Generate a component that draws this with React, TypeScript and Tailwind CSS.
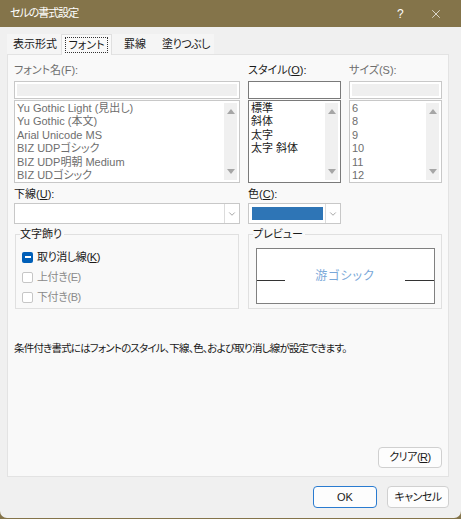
import { ChevronDown, X } from 'lucide-react';

const FONT = "font-['Liberation_Sans','Noto_Sans_CJK_JP',sans-serif] [font-feature-settings:'palt']";

function Arrow({ up }: { up?: boolean }) {
  return (
    <svg width="8" height="5" viewBox="0 0 8 5">
      <polygon points={up ? '0,5 4,0 8,5' : '0,0 8,0 4,5'} fill="#a6a6a6" />
    </svg>
  );
}

function ListBox({ items, muted }: { items: string[]; muted?: boolean }) {
  return (
    <div className={`flex h-[83px] border bg-white ${muted ? 'border-[#c8c8c8]' : 'border-[#7a7a7a]'}`}>
      <div className={`flex-1 overflow-hidden pl-[2px] pt-[1px] text-[11px] leading-[13.4px] ${muted ? 'text-[#6e6e6e]' : 'text-[#1a1a1a]'}`}>
        {items.map((it) => (
          <div key={it} className="whitespace-nowrap">{it}</div>
        ))}
      </div>
      <div className="my-[2px] mr-[2px] flex w-[13px] flex-col items-center justify-between bg-[#f0f0f0] py-[6px]">
        <Arrow up />
        <Arrow />
      </div>
    </div>
  );
}

function TextInput({ muted }: { muted?: boolean }) {
  return (
    <div className={`h-[18px] border bg-white p-[2px] ${muted ? 'border-[#c8c8c8]' : 'border-[#7a7a7a]'}`}>
      <div className={`h-full ${muted ? 'bg-[#efefef]' : 'bg-white'}`} />
    </div>
  );
}

function Label({ children, muted }: { children: React.ReactNode; muted?: boolean }) {
  return (
    <div className={`h-[14px] text-[11px] leading-[14px] ${muted ? 'text-[#6e6e6e]' : 'text-[#1a1a1a]'}`}>{children}</div>
  );
}

function Check({ checked, muted, children }: { checked?: boolean; muted?: boolean; children: React.ReactNode }) {
  return (
    <div className="flex h-[20px] items-center gap-[4px]">
      {checked ? (
        <div className="flex h-[11px] w-[11px] items-center justify-center rounded-[2px] bg-[#005fb8]">
          <div className="h-[1.5px] w-[6px] bg-white" />
        </div>
      ) : (
        <div className="h-[11px] w-[11px] rounded-[2px] border border-[#c6c6c6] bg-white" />
      )}
      <span className={`text-[11px] tracking-[-0.4px] ${muted ? 'text-[#8a8a8a]' : 'text-[#1a1a1a]'}`}>{children}</span>
    </div>
  );
}

function Group({ title, className, children }: { title: string; className: string; children: React.ReactNode }) {
  return (
    <div className={`relative h-[75px] border border-[#e0e0e0] ${className}`}>
      <div className="absolute left-[4px] top-[-8px] bg-[#f9f9f9] pr-[2px] text-[11px] leading-[14px] text-[#1a1a1a]">{title}</div>
      {children}
    </div>
  );
}

export default function App() {
  return (
    <div className={`h-[519px] w-[461px] bg-[#84744a] ${FONT}`}>
      <div className="flex h-[518px] flex-col rounded-b-[7px] bg-[#f0f0f0]">
        {/* Title bar */}
        <div className="flex h-[27px] items-center bg-[#84744a] pl-[10px] text-white">
          <span className="flex-1 text-[11px] tracking-[-1px]">セルの書式設定</span>
          <span className="w-[24px] text-[12px]">?</span>
          <X size={14} strokeWidth={1.2} className="mr-[18px] ml-[8px]" />
        </div>

        {/* Tabs */}
        <div className="mt-[7px] flex h-[20px] pl-[7px] text-[11px] text-[#1a1a1a]">
          <div className="flex w-[54px] items-center justify-center bg-[#f5f5f5] pl-[2px]">表示形式</div>
          <div className="relative z-10 -mb-px flex w-[51px] items-center justify-center border-x border-t border-[#e0e0e0] bg-[#f9f9f9]">
            <span className="border border-dotted border-[#333] px-[2px] leading-[14px]">フォント</span>
          </div>
          <div className="flex w-[46px] items-center justify-center bg-[#f5f5f5]">罫線</div>
          <div className="flex w-[56px] items-center justify-center bg-[#f5f5f5] tracking-[-0.5px]">塗りつぶし</div>
        </div>

        {/* Panel */}
        <div className="mx-[7px] flex h-[423px] w-[442px] flex-col border border-[#e3e3e3] bg-[#f9f9f9] px-[6px] pt-[8px]">
          <div className="flex gap-[8px]">
            <div className="w-[226px]">
              <Label muted>フォント名(F):</Label>
              <div className="mt-[4px]">
                <TextInput muted />
              </div>
              <div className="mt-[1px]">
                <ListBox
                  muted
                  items={['Yu Gothic Light (見出し)', 'Yu Gothic (本文)', 'Arial Unicode MS', 'BIZ UDPゴシック', 'BIZ UDP明朝 Medium', 'BIZ UDゴシック']}
                />
              </div>
            </div>
            <div className="w-[93px]">
              <Label>
                スタイル(<span className="underline">O</span>):
              </Label>
              <div className="mt-[4px]">
                <TextInput />
              </div>
              <div className="mt-[1px]">
                <ListBox items={['標準', '斜体', '太字', '太字 斜体']} />
              </div>
            </div>
            <div className="w-[93px]">
              <Label muted>サイズ(S):</Label>
              <div className="mt-[4px]">
                <TextInput muted />
              </div>
              <div className="mt-[1px]">
                <ListBox muted items={['6', '8', '9', '10', '11', '12']} />
              </div>
            </div>
          </div>

          {/* Underline / colour */}
          <div className="mt-[4px] flex gap-[8px]">
            <div className="w-[226px]">
              <Label>
                下線(<span className="underline">U</span>):
              </Label>
              <div className="mt-[2px] flex h-[21px] border border-[#c8c8c8] bg-white">
                <div className="flex-1" />
                <div className="flex w-[15px] items-center justify-center border-l border-[#dcdcdc]">
                  <ChevronDown size={10} strokeWidth={1.5} color="#707070" />
                </div>
              </div>
            </div>
            <div className="w-[93px]">
              <Label>
                色(<span className="underline">C</span>):
              </Label>
              <div className="mt-[2px] flex h-[21px] border border-[#c8c8c8] bg-white">
                <div className="flex-1 py-[3px] pl-[3px] pr-[2px]">
                  <div className="h-full bg-[#2e75b6]" />
                </div>
                <div className="flex w-[15px] items-center justify-center border-l border-[#dcdcdc]">
                  <ChevronDown size={10} strokeWidth={1.5} color="#707070" />
                </div>
              </div>
            </div>
          </div>

          {/* Groups */}
          <div className="mt-[10px] flex">
            <Group title="文字飾り" className="ml-[1px] w-[224px]">
              <div className="pl-[6px] pt-[12px]">
                <Check checked>
                  取り消し線(<span className="underline">K</span>)
                </Check>
                <Check muted>上付き(E)</Check>
                <Check muted>下付き(B)</Check>
              </div>
            </Group>
            <Group title="プレビュー" className="ml-[9px] w-[194px]">
              <div className="ml-[7px] mt-[13px] flex h-[56px] w-[179px] items-center border border-[#808080] bg-white">
                <div className="mt-[8px] h-px w-[28px] bg-[#333]" />
                <div className="flex-1 text-center text-[12px] tracking-[1px] text-[#79a7d8]">游ゴシック</div>
                <div className="mt-[8px] h-px w-[29px] bg-[#333]" />
              </div>
            </Group>
          </div>

          <div className="mt-[32px] whitespace-nowrap text-[10.5px] tracking-[-0.8px] text-[#1a1a1a]">
            条件付き書式にはフォントのスタイル、下線、色、および取り消し線が設定できます。
          </div>

          <div className="mb-[8px] mt-auto flex justify-end">
            <button className="h-[21px] w-[64px] rounded-[4px] border border-[#d0d0d0] bg-[#fdfdfd] text-[11px] tracking-[-0.5px] text-[#1a1a1a]">
              クリア(<span className="underline">R</span>)
            </button>
          </div>
        </div>

        {/* Footer buttons */}
        <div className="mt-[9px] flex justify-end gap-[10px] pr-[12px]">
          <button className="h-[22px] w-[64px] rounded-[4px] border border-[#2a7bd0] bg-[#fdfdfd] text-[11px] text-[#1a1a1a]">OK</button>
          <button className="h-[22px] w-[62px] rounded-[4px] border border-[#d0d0d0] bg-[#fdfdfd] text-[11px] tracking-[-0.5px] text-[#1a1a1a]">キャンセル</button>
        </div>
      </div>
    </div>
  );
}
